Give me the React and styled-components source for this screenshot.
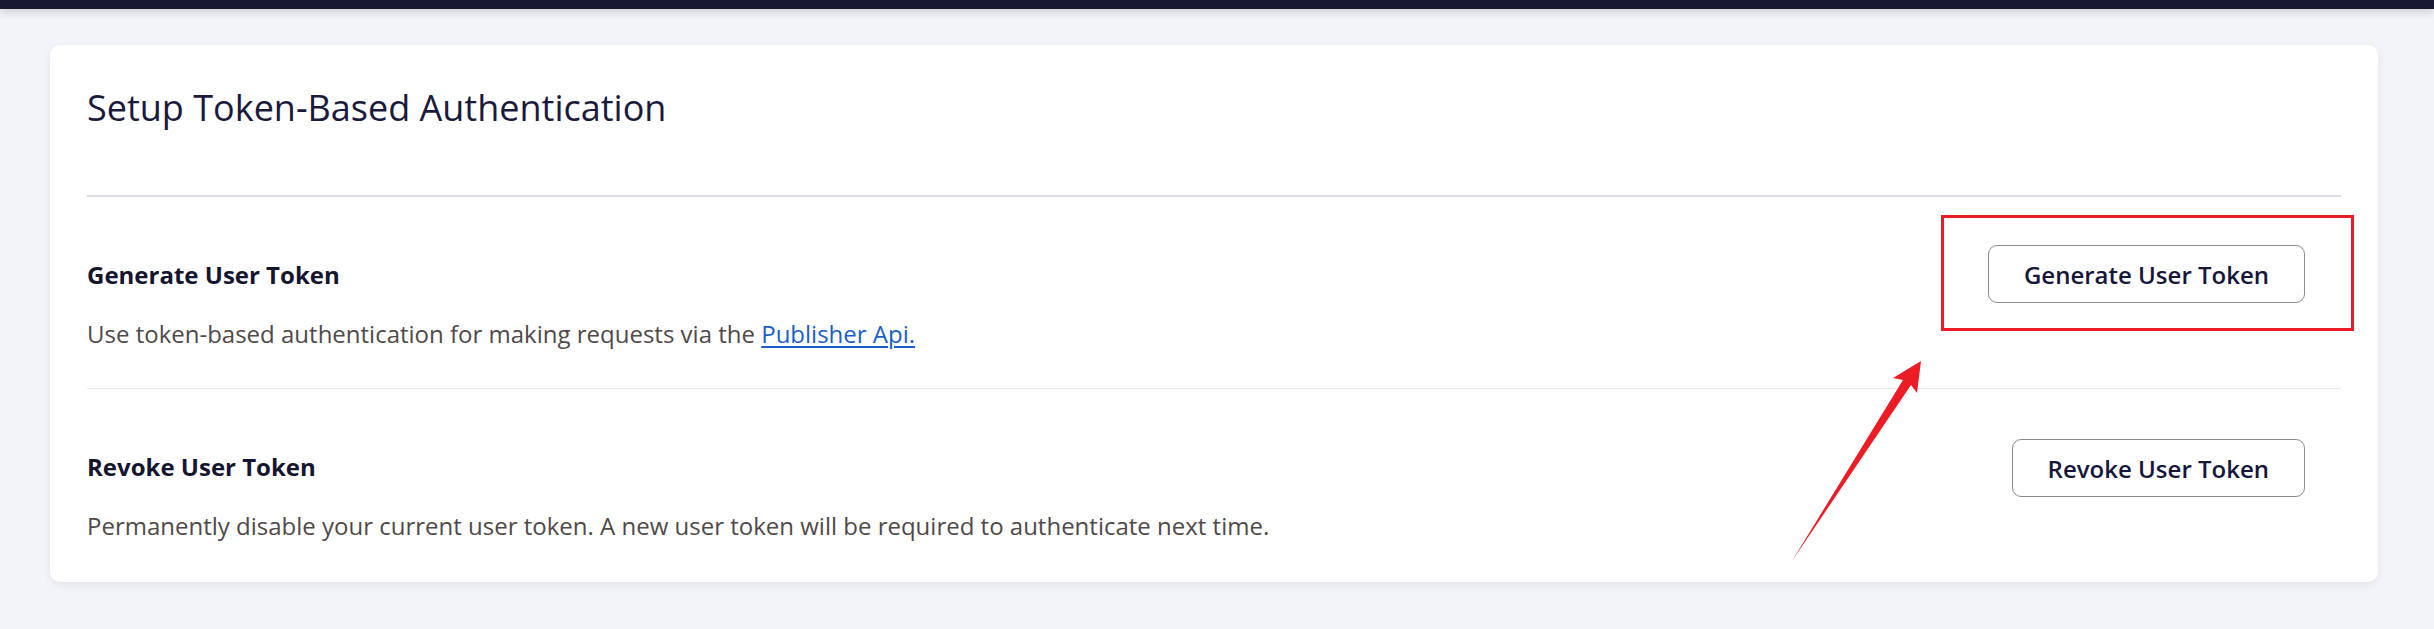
import React from 'react';
import styled, { createGlobalStyle } from 'styled-components';

const GlobalStyle = createGlobalStyle`
	body {
		margin: 0;
		background: #f3f4f8;
		font-family: 'Open Sans', 'Noto Sans', sans-serif;
	}
`;

const Topbar = styled.div`
	height: 9px;
	background: #181833;
	box-shadow: 0 3px 8px rgba(20, 20, 50, 0.18);
`;

const Main = styled.main`
	padding: 36px 56px 44px 50px;
`;

const Card = styled.section`
	position: relative;
	background: #fff;
	border-radius: 10px;
	box-shadow: 0 3px 8px rgba(30, 30, 70, 0.07);
	padding: 38px 37px 2px;
`;

const Heading = styled.h1`
	margin: 0;
	padding-bottom: 63px;
	border-bottom: 2px solid #dcdde6;

	font-size: 36px;
	font-weight: 400;
	line-height: 49px;
	color: #1a1a3c;
`;

const Row = styled.div`
	display: flex;
	justify-content: space-between;
	align-items: flex-start;

	padding: 48px 0 38px;
	border-bottom: ${(p) => (p.$last ? 'none' : '1px solid #e6e6ec')};
`;

const TextBlock = styled.div`
	padding-top: 13px;
`;

const Title = styled.h2`
	margin: 0;
	font-size: 24px;
	font-weight: 700;
	line-height: 33px;
	color: #15152f;
`;

const Description = styled.p`
	margin: 26px 0 0;
	font-size: 24px;
	line-height: 33px;
	color: #4f4949;
`;

const Link = styled.a`
	color: #1a5fc8;
	text-decoration: underline;
	text-underline-offset: 3px;
`;

const ButtonCell = styled.div`
	padding-right: 36px;
`;

const Button = styled.button`
	position: relative;
	height: 58px;
	margin-top: ${(p) => (p.$highlight ? '0' : '2px')};
	padding: 0 35px;

	background: #fff;
	border: 1.5px solid #8d8d8d;
	border-radius: 9px;

	font-family: inherit;
	font-size: 24px;
	font-weight: 600;
	color: #16163a;
	cursor: pointer;

	${(p) =>
		p.$highlight &&
		`
		&::after {
			content: '';
			position: absolute;
			inset: -31px -50px -29px -48px;
			border: 3px solid #ec1c24;
			pointer-events: none;
		}
	`}
`;

const Arrow = styled.svg`
	position: absolute;
	left: 1730px;
	top: 305px;
	overflow: visible;
	pointer-events: none;
`;

const settings = [
	{
		title: 'Generate User Token',
		text: (
			<>
				Use token-based authentication for making requests via the{' '}
				<Link href="#publisher-api">Publisher Api.</Link>
			</>
		),
		button: 'Generate User Token',
		highlight: true,
	},
	{
		title: 'Revoke User Token',
		text: 'Permanently disable your current user token. A new user token will be required to authenticate next time.',
		button: 'Revoke User Token',
	},
];

const App = () => (
	<>
		<GlobalStyle />
		<Topbar />
		<Main>
			<Card>
				<Heading>Setup Token-Based Authentication</Heading>

				{settings.map((s, i) => (
					<Row key={s.title} $last={i === settings.length - 1}>
						<TextBlock>
							<Title>{s.title}</Title>
							<Description>{s.text}</Description>
						</TextBlock>
						<ButtonCell>
							<Button $highlight={s.highlight}>{s.button}</Button>
						</ButtonCell>
					</Row>
				))}

				{/* annotation arrow, coordinates relative to the card */}
				<Arrow width="140" height="210" viewBox="0 0 140 210">
					<polygon
						points="141,11 137,43 131,35 12,211 123,30 113,28"
						fill="#ec1c24"
					/>
				</Arrow>
			</Card>
		</Main>
	</>
);

export default App;
